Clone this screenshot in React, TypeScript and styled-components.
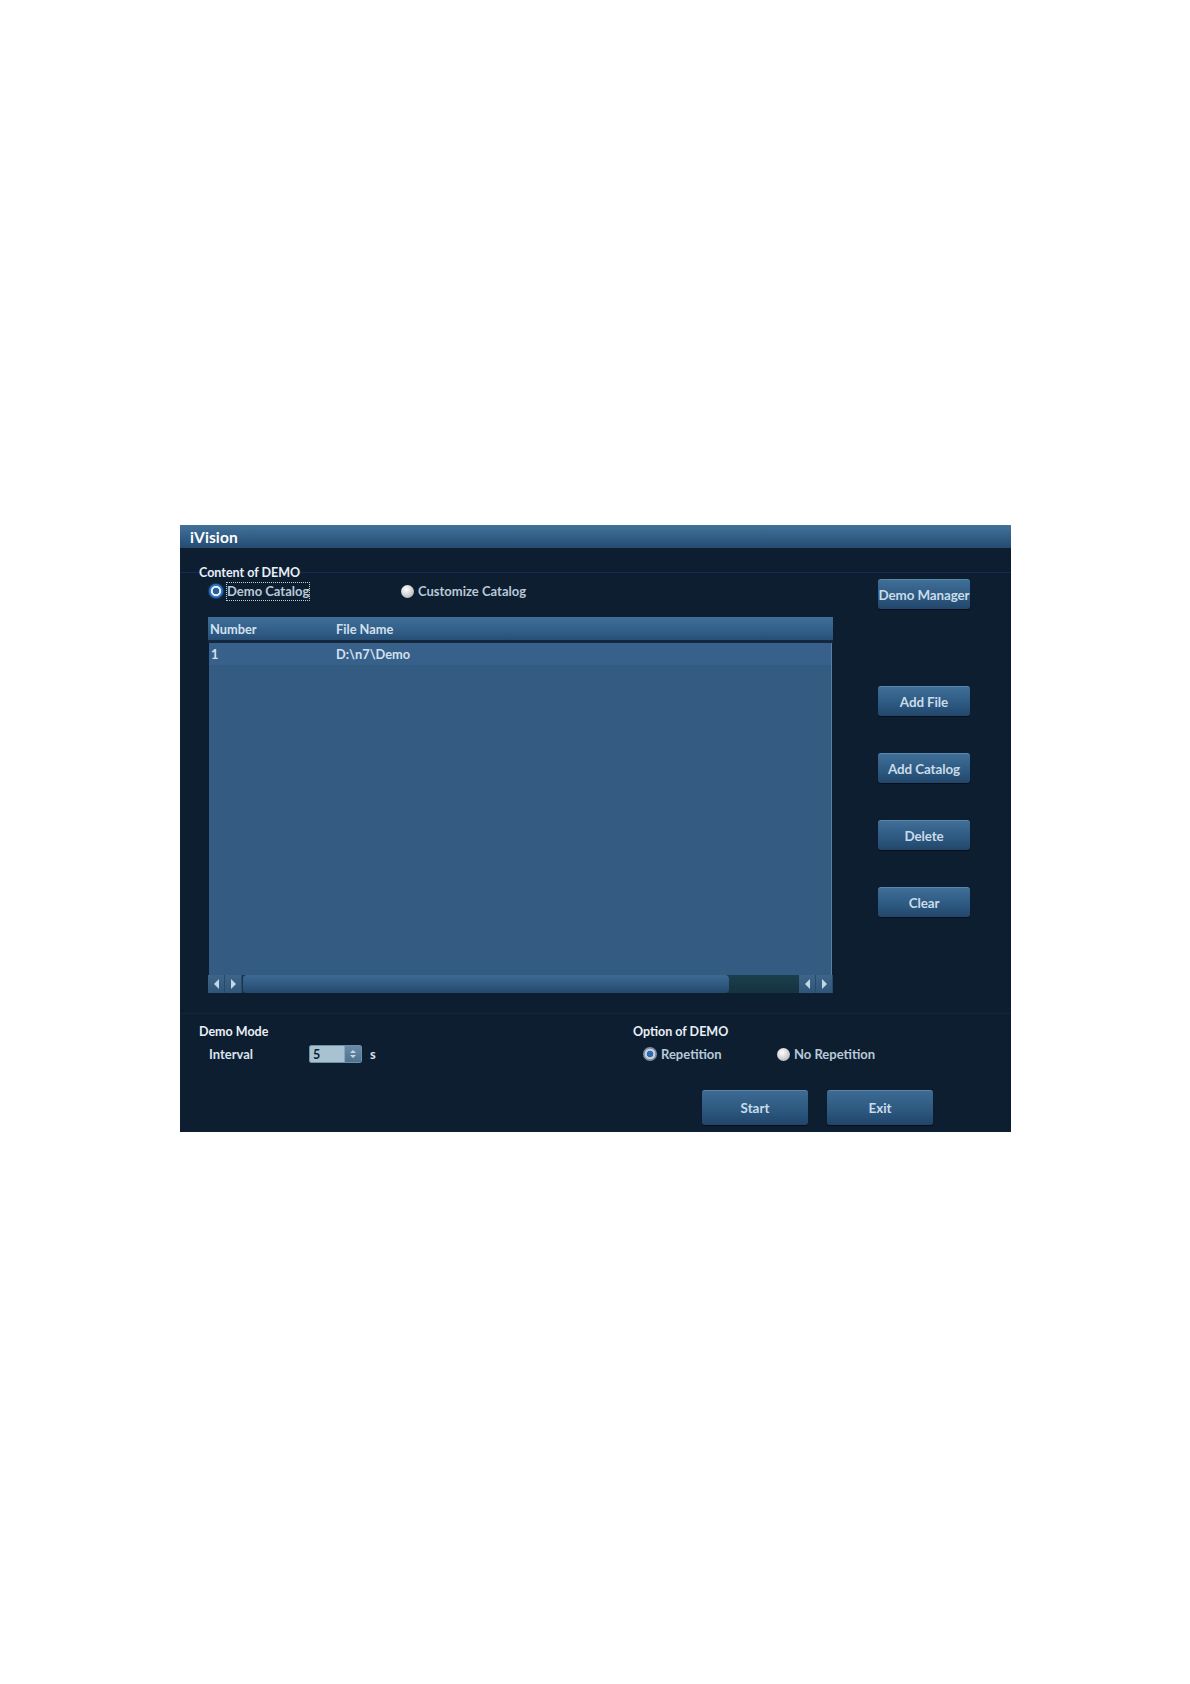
import React from "react";
import styled, { createGlobalStyle, css } from "styled-components";

const GlobalStyle = createGlobalStyle`
  html, body { margin: 0; padding: 0; background: #ffffff; }
  body { font-family: Lato, "Open Sans", "Liberation Sans", sans-serif; }
  * { box-sizing: border-box; }
`;

const Page = styled.div`
  width: 1190px;
  height: 1684px;
  padding: 525px 0 0 180px;
`;

const Dialog = styled.div`
  width: 831px;
  height: 607px;
  background: #0e1e31;
  display: flex;
  flex-direction: column;
`;

const TitleBar = styled.div`
  height: 23px;
  padding-left: 10px;
  display: flex;
  align-items: center;
  background: linear-gradient(to bottom, #42729a 0%, #325f87 50%, #244b71 100%);
  color: #ffffff;
  font-weight: 700;
  font-size: 15.5px;
  letter-spacing: 0.1px;
`;

const Body = styled.div`
  flex: 1;
  padding-left: 19px;
  display: flex;
  flex-direction: column;
  background:
    linear-gradient(to bottom, transparent 24px, #15285a 24px, #15285a 25px, transparent 25px),
    linear-gradient(to bottom, transparent 465px, #13253d 465px, #13253d 466px, transparent 466px),
    #0e1e31;
`;

const TopSection = styled.div`
  display: flex;
`;

const LeftCol = styled.div`
  width: 634px;
  display: flex;
  flex-direction: column;
`;

const RightCol = styled.div`
  margin-left: 45px;
  width: 92px;
  display: flex;
  flex-direction: column;
  padding-top: 31px;
`;

const SectionLabel = styled.div<{ $top?: number }>`
  margin-top: ${(p) => p.$top ?? 0}px;
  height: 16px;
  line-height: 16px;
  font-size: 12.5px;
  font-weight: 700;
  color: #e9eff6;
  white-space: nowrap;
`;

const RadioRow = styled.div`
  height: 20px;
  padding-left: 10px;
  display: flex;
  align-items: center;
`;

const RadioItem = styled.div<{ $width?: number }>`
  display: flex;
  align-items: center;
  gap: 3px;
  width: ${(p) => (p.$width ? `${p.$width}px` : "auto")};
  flex-shrink: 0;
`;

const RadioDot = styled.span<{ $checked?: boolean; $focus?: boolean }>`
  width: 14px;
  height: 14px;
  border-radius: 50%;
  flex-shrink: 0;
  ${(p) =>
    p.$checked
      ? p.$focus
        ? css`
            background: radial-gradient(circle, #2c5f9a 0 3px, #e6eef6 3.6px 4.8px, #2f79d0 5.4px 7px);
            box-shadow: 0 0 2px #3d8ae0;
          `
        : css`
            background: radial-gradient(circle, #2f6bb4 0 3px, #c5d2de 3.6px 5px, #7d8fa0 5.6px 7px);
          `
      : css`
          width: 13px;
          height: 13px;
          background: radial-gradient(circle at 40% 35%, #ffffff 0, #d8d8d8 45%, #9ea4aa 100%);
        `}
`;

const RadioText = styled.span<{ $focus?: boolean }>`
  font-size: 13px;
  font-weight: 700;
  color: #b8c9d8;
  line-height: 17px;
  white-space: nowrap;
  border: 1px dotted ${(p) => (p.$focus ? "#c4ccd4" : "transparent")};
`;

const Table = styled.div`
  margin: 16px 0 0 9px;
  width: 625px;
  display: flex;
  flex-direction: column;
`;

const HeaderRow = styled.div`
  display: flex;
  align-items: center;
  background: linear-gradient(to bottom, #3f6e97 0%, #32608a 55%, #284f76 100%);
  border-bottom: 3px solid #14273d;
  height: 26px;
`;

const Cell = styled.div<{ $width?: number }>`
  width: ${(p) => (p.$width ? `${p.$width}px` : "auto")};
  flex: ${(p) => (p.$width ? "none" : "1")};
  padding-left: 2px;
  font-size: 12.8px;
  font-weight: 700;
  color: #d3e1ee;
  white-space: nowrap;
`;

const TableBody = styled.div`
  height: 332px;
  margin: 0 1px;
  background: #345b81;
  border-right: 1px solid #5d7f9e;
`;

const DataRow = styled.div`
  height: 22px;
  display: flex;
  align-items: center;
  background: #37608a;
`;

const ScrollBar = styled.div`
  height: 18px;
  display: flex;
  align-items: stretch;
  background: #173646;
`;

const ArrowBtn = styled.div`
  width: 17px;
  display: flex;
  align-items: center;
  justify-content: center;
  background: linear-gradient(to bottom, #3e6587, #2f5678);
  border-right: 1px solid #28496a;
`;

const Thumb = styled.div`
  width: 486px;
  margin-left: 1px;
  border-radius: 4px;
  background: linear-gradient(to bottom, #3d6a92 0%, #2f5a82 50%, #25486b 100%);
`;

const Track = styled.div`
  flex: 1;
  background: linear-gradient(to bottom, #1b3f4c, #153241);
`;

const SideButton = styled.button<{ $gap: number }>`
  margin-top: ${(p) => p.$gap}px;
  height: 30px;
  width: 92px;
  padding: 0;
  border: none;
  border-top: 1px solid #5a88ad;
  border-radius: 3px;
  background: linear-gradient(to bottom, #3f6e96 0%, #2e5a82 55%, #22466a 100%);
  box-shadow: 0 1px 1px rgba(0, 0, 0, 0.5);
  color: #c9dcea;
  font-family: inherit;
  font-weight: 700;
  font-size: 13.4px;
  white-space: nowrap;
  letter-spacing: -0.1px;
`;

const BottomGrid = styled.div`
  margin-top: 31px;
  display: grid;
  grid-template-columns: 434px 1fr;
  grid-template-rows: 16px 20px;
  row-gap: 4px;
`;

const FieldRow = styled.div`
  height: 20px;
  padding-left: 10px;
  display: flex;
  align-items: center;
`;

const FieldLabel = styled.span`
  width: 100px;
  font-size: 13px;
  font-weight: 700;
  color: #d8e3ee;
`;

const SpinBox = styled.div`
  width: 53px;
  height: 18px;
  display: flex;
  border-radius: 2px;
  overflow: hidden;
  border: 1px solid #6e90aa;
`;

const SpinField = styled.div`
  flex: 1;
  padding-left: 3px;
  display: flex;
  align-items: center;
  background: #a9c2d2;
  color: #0e1e31;
  font-size: 12.5px;
  font-weight: 700;
`;

const SpinArrows = styled.div`
  width: 17px;
  display: flex;
  flex-direction: column;
  align-items: center;
  justify-content: center;
  gap: 2px;
  background: linear-gradient(to bottom, #6a8ba5, #4e7290);
  border-left: 1px solid #8aa8bf;
`;

const Unit = styled.span`
  margin-left: 8px;
  font-size: 13px;
  font-weight: 700;
  color: #d8e3ee;
`;

const ActionRow = styled.div`
  margin-top: 26px;
  padding-left: 503px;
  display: flex;
  gap: 19px;
`;

const ActionButton = styled.button`
  width: 106px;
  height: 35px;
  padding: 0;
  border: none;
  border-top: 1px solid #5a88ad;
  border-radius: 3px;
  background: linear-gradient(to bottom, #3c6a92 0%, #2d5980 55%, #21456a 100%);
  box-shadow: 0 1px 1px rgba(0, 0, 0, 0.5);
  color: #c9dcea;
  font-family: inherit;
  font-weight: 700;
  font-size: 13.4px;
`;

const Tri = ({ dir, size = 5 }: { dir: "left" | "right" | "up" | "down"; size?: number }) => {
  const horizontal = dir === "left" || dir === "right";
  const pts =
    dir === "left"
      ? "5,0 5,10 0,5"
      : dir === "right"
      ? "0,0 0,10 5,5"
      : dir === "up"
      ? "0,5 10,5 5,0"
      : "0,0 10,0 5,5";
  const w = horizontal ? size : size * 2;
  const h = horizontal ? size * 2 : size;
  return (
    <svg width={w} height={h} viewBox={horizontal ? "0 0 5 10" : "0 0 10 5"}>
      <polygon points={pts} fill="#c3d6e6" />
    </svg>
  );
};

export default function App() {
  return (
    <>
      <GlobalStyle />
      <Page>
        <Dialog>
          <TitleBar>iVision</TitleBar>
          <Body>
            <TopSection>
              <LeftCol>
                <SectionLabel $top={17}>Content of DEMO</SectionLabel>
                <RadioRow>
                  <RadioItem $width={192}>
                    <RadioDot $checked $focus />
                    <RadioText $focus>Demo Catalog</RadioText>
                  </RadioItem>
                  <RadioItem>
                    <RadioDot />
                    <RadioText>Customize Catalog</RadioText>
                  </RadioItem>
                </RadioRow>
                <Table>
                  <HeaderRow>
                    <Cell $width={126}>Number</Cell>
                    <Cell>File Name</Cell>
                  </HeaderRow>
                  <TableBody>
                    <DataRow>
                      <Cell $width={125}>1</Cell>
                      <Cell>D:\n7\Demo</Cell>
                    </DataRow>
                  </TableBody>
                  <ScrollBar>
                    <ArrowBtn>
                      <Tri dir="left" />
                    </ArrowBtn>
                    <ArrowBtn>
                      <Tri dir="right" />
                    </ArrowBtn>
                    <Thumb />
                    <Track />
                    <ArrowBtn>
                      <Tri dir="left" />
                    </ArrowBtn>
                    <ArrowBtn>
                      <Tri dir="right" />
                    </ArrowBtn>
                  </ScrollBar>
                </Table>
              </LeftCol>
              <RightCol>
                <SideButton $gap={0}>Demo Manager</SideButton>
                <SideButton $gap={77}>Add File</SideButton>
                <SideButton $gap={37}>Add Catalog</SideButton>
                <SideButton $gap={37}>Delete</SideButton>
                <SideButton $gap={37}>Clear</SideButton>
              </RightCol>
            </TopSection>
            <BottomGrid>
              <SectionLabel>Demo Mode</SectionLabel>
              <SectionLabel>Option of DEMO</SectionLabel>
              <FieldRow>
                <FieldLabel>Interval</FieldLabel>
                <SpinBox>
                  <SpinField>5</SpinField>
                  <SpinArrows>
                    <Tri dir="up" size={3} />
                    <Tri dir="down" size={3} />
                  </SpinArrows>
                </SpinBox>
                <Unit>s</Unit>
              </FieldRow>
              <FieldRow>
                <RadioItem $width={134}>
                  <RadioDot $checked />
                  <RadioText>Repetition</RadioText>
                </RadioItem>
                <RadioItem>
                  <RadioDot />
                  <RadioText>No Repetition</RadioText>
                </RadioItem>
              </FieldRow>
            </BottomGrid>
            <ActionRow>
              <ActionButton>Start</ActionButton>
              <ActionButton>Exit</ActionButton>
            </ActionRow>
          </Body>
        </Dialog>
      </Page>
    </>
  );
}
